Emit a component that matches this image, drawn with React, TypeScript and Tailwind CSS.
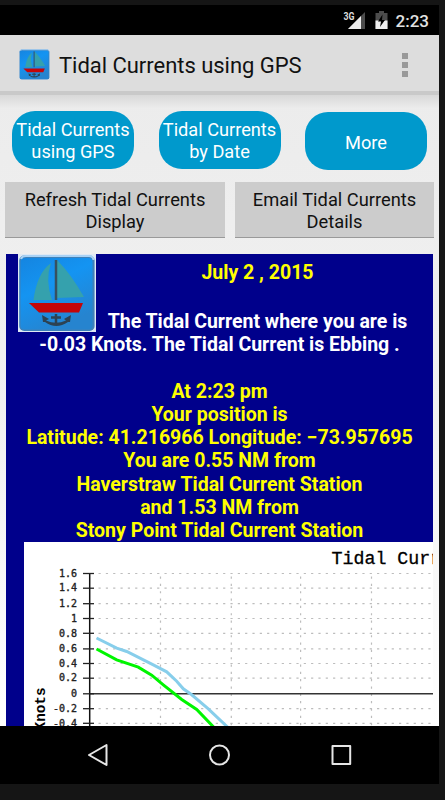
const lines = [
  "At 2:23 pm",
  "Your position is",
  "Latitude: 41.216966 Longitude: −73.957695",
  "You are 0.55 NM from",
  "Haverstraw Tidal Current Station",
  "and 1.53 NM from",
  "Stony Point Tidal Current Station",
];

const ticks: [string, number][] = [
  ["1.6", 573], ["1.4", 587.7], ["1.2", 603.2], ["1", 618], ["0.8", 632.8], ["0.6", 648.4],
  ["0.4", 663], ["0.2", 677.7], ["0", 693.3], ["-0.2", 708.2], ["-0.4", 722.8],
];

function BoatIcon({ className }: { className: string }) {
  return (
    <svg className={className} viewBox="0 0 78 78">
      <defs>
        <linearGradient id="sea" x1="0" y1="0" x2="0.5" y2="1">
          <stop offset="0" stopColor="#1585e0" />
          <stop offset="0.45" stopColor="#1494f2" />
          <stop offset="1" stopColor="#2684cf" />
        </linearGradient>
      </defs>
      <rect width="78" height="78" fill="#dfe9f4" />
      <rect x="1.2" y="1.5" width="75.4" height="75.5" rx="5" fill="#3e81b9" />
      <rect x="2.5" y="4" width="72" height="71.5" rx="4" fill="url(#sea)" />
      <path d="M3 5Q4 2 8 2H71Q75 2 75.5 6" fill="none" stroke="#a9d2f5" strokeWidth="2" />
      <path d="M33 9Q19 19 15.500 46H34Q27 26 33 9Z" fill="#35a1ad" />
      <path d="M39 6Q53 20 66 43L39 44Z" fill="#35a1ad" />
      <path d="M38 6V46" stroke="#37505f" strokeWidth="2.500" />
      <path d="M11 49H65L61 58.500H21Z" fill="#c40508" />
      <path d="M38 60V70M33 63.500H43" fill="none" stroke="#2d4252" strokeWidth="2.500" />
      <path d="M24 61L31 65L28 66.500Q38 71 48 66.500L46 65L53 61L52 68L50 68Q38 76 27 68H25Z" fill="#2d4252" />
    </svg>
  );
}

function Chart() {
  return (
    <svg className="ml-[18px] h-[184.5px] w-[409px] shrink-0 bg-white font-normal" viewBox="24 541.5 409 184.5">
      <text x="331.5" y="563.800" fontSize="18.300" stroke="#000" strokeWidth="0.300" className="font-['Liberation_Mono',monospace]">Tidal Currents</text>
      <g stroke="#bdbdbd" strokeWidth="1.200" strokeDasharray="2.200 5.130">
        {ticks.map(([label, y]) => label !== "0" && <path key={label} d={`M98.500 ${y}H433`} />)}
        {[160.5, 231.3, 300.6, 371.5].map((x) => <path key={x} d={`M${x} 576V726`} />)}
      </g>
      <path d="M90 693.300H433" stroke="#333" strokeWidth="1.400" />
      <path d="M89.700 572.500V726" stroke="#111" strokeWidth="1.500" />
      {ticks.map(([label, y]) => (
        <g key={label}>
          <path d={`M83 ${y}H94`} stroke="#222" strokeWidth="1.300" />
          <text x="77" y={y + 3.2} textAnchor="end" fontSize="10" fill="#222" className="font-['DejaVu_Sans_Mono',monospace]" stroke="#222" strokeWidth="0.350">{label}</text>
        </g>
      ))}
      <text transform="translate(44.500 687) rotate(-90)" textAnchor="end" fontSize="14.300" fontWeight="bold" className="font-['Liberation_Mono',monospace]">Knots</text>
      <polyline fill="none" stroke="#00f500" strokeWidth="3" points="96.500,648.500 116.700,659.300 138.300,666.700 151.700,674.700 163.300,684.300 181.700,699 196.700,709 215,728" />
      <polyline fill="none" stroke="#87ceeb" strokeWidth="3" points="96.500,637.500 116.700,647.700 126.700,651 153.300,664.300 166.700,671.300 176.700,680.700 183.300,688.300 191.700,694.300 208.300,708.300 229,728" />
    </svg>
  );
}

export default function App() {
  return (
    <div className="h-[800px] w-[445px] overflow-hidden bg-[#151515] pt-[5px] font-['Roboto',sans-serif]">
      <div className="flex h-[779px] w-[439px] flex-col bg-black">
        <div className="flex h-[30px] shrink-0 items-center justify-end pr-[10px]">
          <svg className="mr-[9px] h-[20px] w-[23px]" viewBox="343 10 23 20">
            <path d="M348 29L365 12V29Z" fill="#4c4c4c" />
            <path d="M348 29L361 16V29Z" fill="#eee" />
            <text x="343.500" y="19.500" fontSize="10.500" fontWeight="bold" fill="#ddd" textLength="11" lengthAdjust="spacingAndGlyphs">3G</text>
          </svg>
          <svg className="mr-[8px] h-[20px] w-[13px]" viewBox="375 10 13 20">
            <path d="M375.500 13H379V11H384V13H387.500V29H375.500Z" fill="#4c4c4c" />
            <path d="M375.500 20.500H387.500V29H375.500Z" fill="#eee" />
            <path d="M382.500 14.500L378 21.500H381L380 27L385 20H382Z" fill="#000" />
          </svg>
          <span className="pt-[2px] text-[17px] font-medium leading-[20px] text-[#e2e2e2]">2:23</span>
        </div>
        <div className="flex h-[56px] shrink-0 items-center bg-[#dddddd] pl-[19px] pt-[3px]">
          <BoatIcon className="h-[31px] w-[31px] rounded-[3px]" />
          <h1 className="ml-[9px] w-[334px] pt-[3px] text-[22px] leading-[28px] tracking-[-0.030px] text-[#111]">Tidal Currents using GPS</h1>
          <div className="ml-[9px] flex flex-col gap-[3px]">
            <i className="size-[6px] bg-[#999]" />
            <i className="size-[6px] bg-[#999]" />
            <i className="size-[6px] bg-[#999]" />
          </div>
        </div>
        <div className="flex h-[635px] shrink-0 flex-col overflow-hidden bg-linear-to-b from-[#ececec] via-[#f1f1f1] to-white">
          <div className="h-[4px] shrink-0 bg-[#c9c9c9]" />
          <div className="h-[13px] shrink-0 bg-linear-to-b from-[#d8d8d8] to-[#ececec]" />
          <div className="flex h-[74px] shrink-0 pl-[12px] pt-[2.5px] text-center text-[18.200px] leading-[21.800px] text-white">
            <button className="mr-[24.500px] h-[58.500px] w-[122px] whitespace-nowrap rounded-[23px] bg-[#0099cc] pt-[2px]">Tidal Currents<br />using GPS</button>
            <button className="mr-[24.500px] h-[58.500px] w-[122px] whitespace-nowrap rounded-[23px] bg-[#0099cc] pt-[2px]">Tidal Currents<br />by Date</button>
            <button className="mt-[1.500px] h-[58px] w-[122px] rounded-[23px] bg-[#0099cc] pt-[3px]">More</button>
          </div>
          <div className="flex h-[72px] shrink-0 gap-[10px] pl-[5px] text-center text-[18.300px] leading-[21.800px] text-[#111]">
            <button className="h-[55.500px] w-[220px] border-b border-[#999] bg-[#cccccc] pt-[3px]">Refresh Tidal Currents<br />Display</button>
            <button className="h-[55.500px] w-[199px] border-b border-[#999] bg-[#cccccc] pt-[3px]">Email Tidal Currents<br />Details</button>
          </div>
          <div className="ml-[6px] flex h-[472px] w-[427px] flex-col overflow-hidden bg-[#00008b] text-center text-[19.500px] font-bold leading-[23.250px] whitespace-nowrap text-[#ffff00]">
            <div className="flex h-[79px] shrink-0 pl-[12px] pr-[14px]">
              <BoatIcon className="h-[78px] w-[78px]" />
              <div className="grow pt-[7px]">
                <p>July 2 , 2015</p>
                <p className="mt-[26px] text-white">The Tidal Current where you are is</p>
              </div>
            </div>
            <p className="mb-[23.250px] text-white">-0.03 Knots. The Tidal Current is Ebbing .</p>
            <div className="h-[162.500px] shrink-0">
              {lines.map((line) => <p key={line}>{line}</p>)}
            </div>
            <Chart />
          </div>
        </div>
        <svg className="h-[58px] w-[439px] shrink-0" viewBox="0 726 439 58" fill="none" stroke="#e6e6e6" strokeWidth="2" strokeLinejoin="round">
          <path d="M89 755L106.500 745V765Z" />
          <circle cx="219.500" cy="755" r="9.500" />
          <rect x="332.500" y="746" width="17.700" height="18" />
        </svg>
      </div>
    </div>
  );
}
